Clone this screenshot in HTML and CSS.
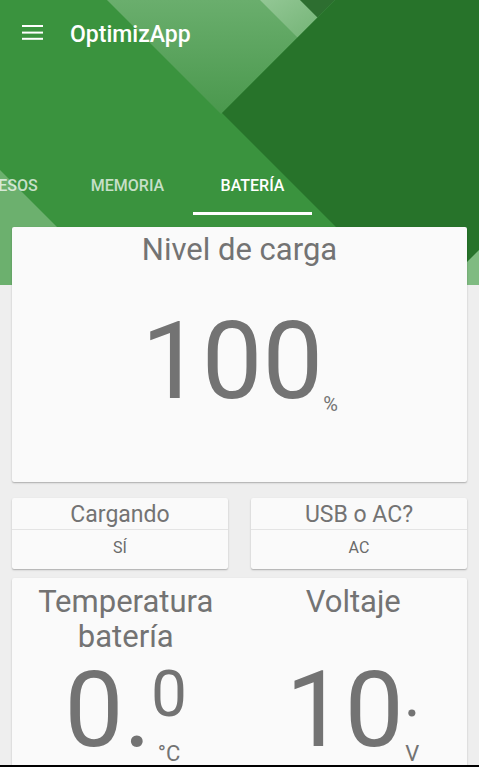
FILE: index.html
```
<!DOCTYPE html>
<html lang="es">
<head>
<meta charset="utf-8">
<title>OptimizApp</title>
<link rel="stylesheet" href="styles.css">
</head>
<body>
<div class="screen">
  <div class="hero-art">
    <svg viewBox="0 0 479 285" width="479" height="285" preserveAspectRatio="none">
      <defs>
        <linearGradient id="band" x1="0" y1="0" x2="0" y2="1">
          <stop offset="0" stop-color="#6aae6d"/>
          <stop offset="1" stop-color="#4a984d"/>
        </linearGradient>
        <linearGradient id="stripe" x1="0" y1="0" x2="1" y2="1">
          <stop offset="0" stop-color="#93c795"/>
          <stop offset="1" stop-color="#74b476"/>
        </linearGradient>
      </defs>
      <rect width="479" height="285" fill="#3a933e"/>
      <polygon points="0,170 115,285 0,285" fill="#6cb06e"/>
      <polygon points="107,0 335,0 221,114" fill="url(#band)"/>
      <polygon points="260,0 300,0 317.5,17.5 297.5,37.5" fill="url(#stripe)"/>
      <polygon points="300,0 335,0 317.5,17.5" fill="#2d6e30"/>
      <polygon points="335,0 479,0 479,285 394,285 222,113" fill="#27732a"/>
      <polygon points="479,250 479,285 444,285" fill="#7fbb81"/>
    </svg>
  </div>

  <header class="appbar">
    <div class="toolbar">
      <svg class="menu-icon" viewBox="0 0 21 15" width="21" height="15">
        <rect x="0" y="0" width="21" height="2" fill="#fff"/>
        <rect x="0" y="6.6" width="21" height="2" fill="#fff"/>
        <rect x="0" y="12.8" width="21" height="2" fill="#fff"/>
      </svg>
      <h1 class="title">OptimizApp</h1>
    </div>
    <nav class="tabs">
      <div class="tab tab-procesos">PROCESOS</div>
      <div class="tab tab-memoria">MEMORIA</div>
      <div class="tab tab-bateria active">BATERÍA</div>
    </nav>
  </header>

  <main class="content">
    <section class="card card-level">
      <h2 class="card-title">Nivel de carga</h2>
      <div class="gauge"><span class="gauge-num">100</span><span class="gauge-unit">%</span></div>
    </section>

    <div class="pair">
      <section class="card mini">
        <h3 class="mini-title">Cargando</h3>
        <div class="mini-value">SÍ</div>
      </section>
      <section class="card mini">
        <h3 class="mini-title">USB o AC?</h3>
        <div class="mini-value">AC</div>
      </section>
    </div>

    <section class="card card-stats">
      <h2 class="card-title">Temperatura<br>batería</h2>
      <h2 class="card-title">Voltaje</h2>
      <div class="reading">
        <span class="reading-main">0.</span>
        <span class="reading-side"><span class="reading-dec">0</span><span class="reading-unit">°C</span></span>
      </div>
      <div class="reading">
        <span class="reading-main">10</span>
        <span class="reading-side"><span class="reading-dec">.</span><span class="reading-unit">V</span></span>
      </div>
    </section>
  </main>
</div>
<div class="nav-edge"></div>
</body>
</html>
```

FILE: styles.css
```
html, body {
  margin: 0;
  padding: 0;
  background: #eeeeee;
}

body {
  font-family: Roboto, "Noto Sans", "Liberation Sans", sans-serif;
  width: 479px;
  height: 767px;
  overflow: hidden;
}

.screen {
  position: relative;
  height: 765px;
  overflow: hidden;
  background: #eeeeee;
}

.hero-art {
  position: absolute;
  top: 0;
  left: 0;
  width: 479px;
  height: 285px;
  z-index: 0;
}

.hero-art svg {
  display: block;
}

.appbar {
  position: relative;
  z-index: 1;
  overflow: hidden;
}

.toolbar {
  height: 64px;
  display: flex;
  align-items: flex-start;
  padding-left: 22px;
}

.menu-icon {
  display: block;
  margin-top: 25px;
  flex: none;
}

.title {
  margin: 21px 0 0 27px;
  font-size: 23px;
  line-height: 27px;
  font-weight: 500;
  color: #ffffff;
}

.tabs {
  margin-top: 102px;
  margin-left: -68px;
  display: flex;
  height: 49px;
}

.tab {
  flex: none;
  display: flex;
  align-items: center;
  justify-content: center;
  box-sizing: border-box;
  height: 49px;
  padding-bottom: 10px;
  font-size: 16px;
  line-height: 16px;
  font-weight: 500;
  color: rgba(255, 255, 255, 0.72);
  white-space: nowrap;
}

.tab-procesos { width: 130px; }
.tab-memoria { width: 131px; }
.tab-bateria { width: 119px; }

.tab.active {
  color: #ffffff;
  box-shadow: inset 0 -3px 0 #ffffff;
}

.content {
  position: relative;
  z-index: 1;
  padding: 12px 12px 0;
}

.card {
  background: #fafafa;
  border-radius: 2px;
  box-shadow: 0 1px 2px rgba(0, 0, 0, 0.22), 0 1px 1px rgba(0, 0, 0, 0.08);
}

.card-title {
  margin: 0;
  font-size: 31px;
  line-height: 35px;
  font-weight: 400;
  color: #737373;
  text-align: center;
}

.card-level {
  padding: 5px 0 67px;
}

.gauge {
  margin-top: 40px;
  text-align: center;
  line-height: 108px;
  height: 108px;
  color: #737373;
}

.gauge-num {
  font-size: 108px;
}

.gauge-unit {
  font-size: 20px;
  line-height: 1;
  vertical-align: -13px;
}

.pair {
  margin-top: 16px;
  display: grid;
  grid-template-columns: 1fr 1fr;
  column-gap: 23px;
}

.mini {
  display: flex;
  flex-direction: column;
}

.mini-title {
  margin: 0;
  padding-top: 2px;
  font-size: 23px;
  line-height: 29px;
  font-weight: 400;
  color: #737373;
  text-align: center;
  border-bottom: 1px solid #e4e4e4;
}

.mini-value {
  padding: 6px 0 9px;
  font-size: 16px;
  line-height: 24px;
  color: #6a6a6a;
  text-align: center;
}

.card-stats {
  margin-top: 9px;
  padding-top: 6px;
  display: grid;
  grid-template-columns: 1fr 1fr;
  row-gap: 4px;
  min-height: 200px;
  align-content: start;
}

.reading {
  display: flex;
  justify-content: center;
  align-items: flex-start;
  color: #737373;
}

.reading-main {
  font-size: 105px;
  line-height: 105px;
}

.reading-side {
  display: flex;
  flex-direction: column;
  align-items: center;
  margin-top: 5px;
}

.reading-dec {
  font-size: 64px;
  line-height: 64px;
}

.reading-unit {
  margin-top: 16px;
  font-size: 22px;
  line-height: 22px;
}

.nav-edge {
  height: 2px;
  background: #000000;
}
```
